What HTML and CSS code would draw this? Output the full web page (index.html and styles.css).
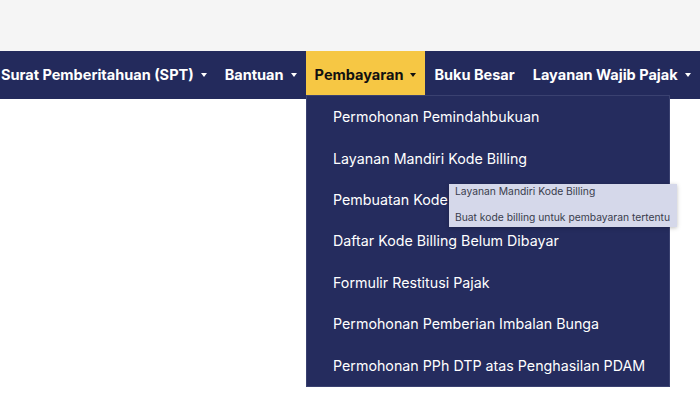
FILE: index.html
```html
<!DOCTYPE html>
<html lang="id">
<head>
<meta charset="utf-8">
<title>Pembayaran</title>
<link rel="stylesheet" href="styles.css">
</head>
<body>
<div class="page">
  <div class="topbar"></div>
  <nav class="navbar">
    <ul class="nav-list">
      <li class="nav-item"><span>Surat Pemberitahuan (SPT)</span><i class="caret"></i></li>
      <li class="nav-item"><span>Bantuan</span><i class="caret"></i></li>
      <li class="nav-item active"><span>Pembayaran</span><i class="caret"></i></li>
      <li class="nav-item"><span>Buku Besar</span></li>
      <li class="nav-item"><span>Layanan Wajib Pajak</span><i class="caret"></i></li>
    </ul>
  </nav>
  <div class="menu-layer">
    <ul class="dropdown">
      <li class="dd-item">Permohonan Pemindahbukuan</li>
      <li class="dd-item">Layanan Mandiri Kode Billing</li>
      <li class="dd-item has-tip">Pembuatan Kode Billing
        <div class="tooltip">
          <div class="tip-line">Layanan Mandiri Kode Billing</div>
          <div class="tip-line">Buat kode billing untuk pembayaran tertentu</div>
        </div>
      </li>
      <li class="dd-item">Daftar Kode Billing Belum Dibayar</li>
      <li class="dd-item">Formulir Restitusi Pajak</li>
      <li class="dd-item">Permohonan Pemberian Imbalan Bunga</li>
      <li class="dd-item">Permohonan PPh DTP atas Penghasilan PDAM</li>
    </ul>
  </div>
</div>
</body>
</html>
```
FILE: styles.css
```css
html, body {
  margin: 0;
  padding: 0;
  background: #ffffff;
  font-family: "Inter", "Noto Sans", "Liberation Sans", sans-serif;
}
.page {
  position: relative;
  width: 700px;
  height: 415px;
  overflow: hidden;
  background: #ffffff;
}
.topbar {
  height: 51px;
  background: #f5f5f5;
}
.navbar {
  height: 48px;
  background: #232a5c;
}
.nav-list {
  list-style: none;
  margin: 0 0 0 -8px;
  padding: 0;
  display: flex;
  white-space: nowrap;
}
.nav-item {
  display: flex;
  align-items: center;
  height: 44px;
  box-sizing: border-box;
  padding: 3px 9px 0 9px;
  color: #ffffff;
  font-weight: 700;
  font-size: 14.52px;
}
.nav-item.active {
  background: #f6c744;
  color: #111111;
}
.caret {
  display: inline-block;
  width: 0;
  height: 0;
  margin-left: 7px;
  border-left: 3.5px solid transparent;
  border-right: 3.5px solid transparent;
  border-top: 4px solid currentColor;
}
.menu-layer {
  position: absolute;
  top: 95px;
  left: 306px;
}
.dropdown {
  list-style: none;
  margin: 0;
  padding: 0;
  width: 364px;
  background: #252c5e;
  border: 1px solid #3a4170;
  box-sizing: border-box;
}
.dd-item {
  position: relative;
  height: 41.4px;
  display: flex;
  align-items: center;
  padding-left: 26px;
  color: #ffffff;
  font-weight: 400;
  font-size: 14.25px;
  white-space: nowrap;
}
.tooltip {
  position: absolute;
  left: 142px;
  top: 5px;
  width: 228px;
  height: 43px;
  box-sizing: border-box;
  padding: 0 6px 3px 6px;
  background: #d5d8ea;
  color: #3a3d4d;
  font-size: 10.3px;
  box-shadow: 0 1px 4px rgba(0, 0, 0, 0.25);
  display: flex;
  flex-direction: column;
  justify-content: space-between;
  z-index: 3;
}
.tip-line {
  line-height: 14px;
}
```
